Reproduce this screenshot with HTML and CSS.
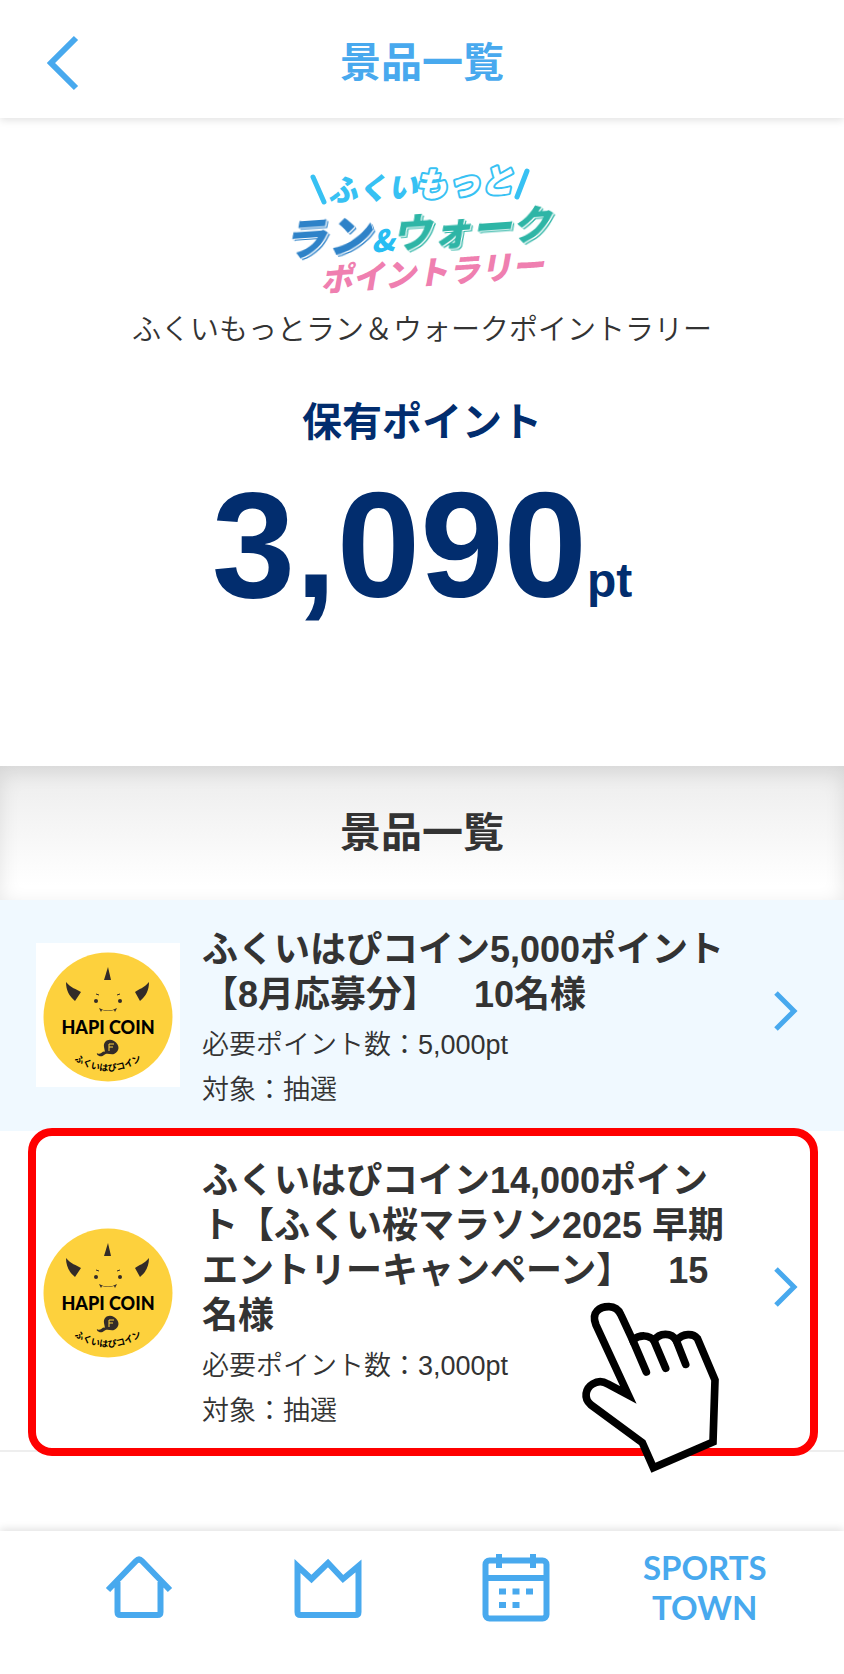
FILE: index.html
```html
<!DOCTYPE html>
<html lang="ja">

<head>
  <meta charset="UTF-8">
  <meta name="viewport" content="width=device-width, initial-scale=1.0">
  <title>景品一覧</title>
  <link rel="stylesheet" href="styles.css">
</head>

<body>
  <header class="header">
    <button class="back" type="button" aria-label="戻る">
      <svg width="32" height="56" viewBox="0 0 32 56"><path d="M29 3 L4 28 L29 53" /></svg>
    </button>
    <h1>景品一覧</h1>
  </header>

  <main>
    <section class="points">
      <svg class="logo" viewBox="20 8 264 136" role="img" aria-label="ふくいもっとラン＆ウォークポイントラリー">
        <path class="slash" d="M43 27 L54 52 M257 21 L247 47" />
        <g transform="rotate(-3 150 50)">
          <text class="logo-sky" x="58" y="47">ふくい</text>
          <text class="logo-outline" x="145" y="47">もっと</text>
        </g>
        <g transform="rotate(-4 150 90)">
          <text class="logo-blue" x="13" y="97">ラン</text>
          <text class="logo-amp" x="101" y="99">&amp;</text>
          <text class="logo-green" x="122" y="97">ウォーク</text>
        </g>
        <text class="logo-pink" x="51" y="142" transform="rotate(-4 51 142)">ポイントラリー</text>
      </svg>
      <p class="rally">ふくいもっとラン＆ウォークポイントラリー</p>
      <h2 class="label">保有ポイント</h2>
      <p class="total">3,090<span>pt</span></p>
    </section>

    <h2 class="list-title">景品一覧</h2>

    <ul class="prizes">
      <li class="prize pale">
        <a href="#">
          <svg class="coin" viewBox="0 0 144 144" role="img" aria-label="HAPI COIN">
            <g id="coin">
              <rect width="144" height="144" fill="#fff" />
              <circle cx="72" cy="74" r="64.5" fill="#fdd13d" />
              <g fill="#332b28">
                <path d="M72 24 L75 37 H68 Z" />
                <path d="M30 39 C35 45 40 46 45 49 L39 58 C33 53 30 47 30 39 Z" />
                <path d="M113 39 C108 45 103 46 99 49 L104 58 C110 53 113 47 113 39 Z" />
                <circle cx="60" cy="58" r="2" />
                <circle cx="84" cy="58" r="2" />
                <path d="M60 51 L63 52 M84 51 L81 52" stroke="#332b28" />
                <path d="M63 65 Q72 70 81 65 L79 69 L78 67 Q72 69 66 67 L65 69 Z" />
                <path d="M68 104 C67 98 73 95 78 98 C84 102 84 108 78 111 C74 112 71 109 68 112 C65 115 60 112 61 110 C64 113 67 107 69 109 Z" />
                <path d="M73 108 V101 H78 M73 104 H77" fill="none" stroke="#fdd13d" />
              </g>
              <text class="coin-name" x="72" y="91">HAPI COIN</text>
              <path id="coinArc" d="M34 114 Q72 142 110 114" fill="none" />
              <text class="coin-kana"><textPath href="#coinArc" startOffset="50%">ふくいはぴコイン</textPath></text>
            </g>
          </svg>
          <div class="info">
            <h3>ふくいはぴコイン5,000ポイント【8月応募分】　10名様</h3>
            <p>必要ポイント数：5,000pt</p>
            <p>対象：抽選</p>
          </div>
          <svg class="arrow" viewBox="0 0 24 40"><path d="M2 2 L20 20 L2 38" /></svg>
        </a>
      </li>
      <li class="prize">
        <a href="#">
          <svg class="coin" viewBox="0 0 144 144" role="img" aria-label="HAPI COIN"><use href="#coin" /></svg>
          <div class="info">
            <h3>ふくいはぴコイン14,000ポイント【ふくい桜マラソン2025 早期エントリーキャンペーン】　15名様</h3>
            <p>必要ポイント数：3,000pt</p>
            <p>対象：抽選</p>
          </div>
          <svg class="arrow" viewBox="0 0 24 40"><path d="M2 2 L20 20 L2 38" /></svg>
        </a>
        <div class="frame"></div>
        <svg class="hand" viewBox="0 0 540 630" aria-hidden="true">
          <path d="M205 345 L108 135 C92 95 120 80 147 80 C163 80 176 89 183 105 L218 180 C240 163 268 164 282 182 C298 158 334 156 349 182 C370 158 400 160 412 175 L465 300 L459 486 L280 563 L247 488 L92 374 C70 355 76 325 98 312 C113 303 130 304 143 312 Z" />
          <path class="knuckle" d="M218 180 L259 276 M282 182 L317 265 M349 182 L377 253" />
        </svg>
      </li>
    </ul>
  </main>

  <nav class="tabs">
    <a href="#" aria-label="ホーム">
      <svg width="68" height="68" viewBox="0 0 68 68">
        <path d="M3 36 L31 7 Q34 4 37 7 L65 36 M12.500 28 V58 Q12.500 61 15.500 61 H52.500 Q55.500 61 55.500 58 V28" />
      </svg>
    </a>
    <a href="#" aria-label="ランキング">
      <svg width="68" height="68" viewBox="0 0 68 68">
        <path d="M3.500 12 L17.500 25 L34 9 L49 25 L64.500 12 V58 Q64.500 61 61.500 61 H6.500 Q3.500 61 3.500 58 Z" />
      </svg>
    </a>
    <a href="#" aria-label="カレンダー">
      <svg width="68" height="68" viewBox="0 0 68 68">
        <rect x="3.500" y="6.500" width="61" height="58" rx="4" />
        <path d="M3 24 H65 M17 0 V14 M51 0 V14" />
        <path d="M17 37.500 H24 M30.500 37.500 H37.500 M44 37.500 H51 M17 51 H24 M30.500 51 H37.500" />
      </svg>
    </a>
    <a class="town" href="#">SPORTS<br>TOWN</a>
  </nav>
</body>

</html>
```

FILE: styles.css
```css
* {
  box-sizing: border-box;
}

body {
  margin: 0;
  min-height: 100vh;
  display: flex;
  flex-direction: column;
  background: #fff;
  color: #333;
  font-family: "Liberation Sans", "Noto Sans CJK JP", sans-serif;
  text-spacing-trim: space-all;
}

h1,
h2,
h3,
p,
ul {
  margin: 0;
  padding: 0;
}

a {
  color: inherit;
  text-decoration: none;
}

svg {
  display: block;
  flex-shrink: 0;
}

/* header */
.header {
  display: grid;
  grid-template-columns: 79px 1fr 79px;
  align-items: center;
  height: 118px;
  padding-top: 8px;
  box-shadow: 0 2px 8px rgba(0, 0, 0, 0.12);
}

.header h1 {
  font-size: 41px;
  line-height: 60px;
  text-align: center;
  color: #48a9ee;
}

.back {
  justify-self: end;
  padding: 0;
  border: none;
  background: none;
  cursor: pointer;
}

.back path,
.arrow path {
  fill: none;
  stroke: #48a9ee;
  stroke-width: 6;
}

.arrow path {
  stroke-width: 5;
}

/* points */
.points {
  padding: 40px 16px 146px;
  text-align: center;
}

.logo {
  width: 264px;
  height: 136px;
  margin: 0 auto 16px;
  overflow: visible;
  font-family: "Noto Sans CJK JP", sans-serif;
  font-style: italic;
  font-weight: 900;
}

.slash {
  fill: none;
  stroke: #37c1f3;
  stroke-width: 5;
  stroke-linecap: round;
}

.logo-sky {
  font-size: 30px;
  fill: #37c1f3;
}

.logo-outline {
  font-size: 33px;
  fill: #fff;
  stroke: #37c1f3;
  stroke-width: 4;
  stroke-linejoin: round;
  paint-order: stroke;
}

.logo-blue {
  font-size: 44px;
  fill: #2e82c8;
  filter: drop-shadow(1px 1px 0 #fff) drop-shadow(1px 1px 0 #2e82c8);
}

.logo-green {
  font-size: 40px;
  fill: #2eb5a6;
  filter: drop-shadow(1px 1px 0 #fff) drop-shadow(1px 1px 0 #2eb5a6);
}

.logo-amp {
  font-size: 30px;
  fill: #28bdf3;
}

.logo-pink {
  font-size: 32px;
  fill: #ef7fb0;
}

.rally {
  font-size: 29px;
  line-height: 40px;
  font-weight: 350;
}

.label {
  margin-top: 42px;
  font-size: 40px;
  line-height: 60px;
  color: #022d6e;
}

.total {
  margin-top: 18px;
  font-size: 150px;
  line-height: 150px;
  font-weight: bold;
  color: #022d6e;
}

.total span {
  font-size: 48px;
  line-height: 48px;
}

/* prizes */
.list-title {
  padding: 37px 0;
  font-size: 41px;
  line-height: 60px;
  text-align: center;
  background: linear-gradient(#ececec, #fff 90%);
  box-shadow: inset 0 6px 20px rgba(0, 0, 0, 0.1);
}

.prizes {
  list-style: none;
}

.prize {
  position: relative;
  border-bottom: 2px solid #eee;
}

.pale {
  background: #f0f9ff;
  border-color: #f0f9ff;
}

.prize a {
  display: flex;
  align-items: center;
  gap: 22px;
  padding: 17px 46px 16px 36px;
}

.coin {
  width: 144px;
  height: 144px;
}

.coin-name {
  font-family: Lato, sans-serif;
  font-size: 18px;
  font-weight: 900;
  text-anchor: middle;
}

.coin-kana {
  font-family: "Noto Sans CJK JP", sans-serif;
  font-size: 9px;
  font-weight: 700;
  text-anchor: middle;
}

.info {
  flex: 1;
  max-width: 530px;
  margin-top: 10px;
}

.info h3 {
  margin-bottom: 6px;
  font-size: 36px;
  line-height: 45px;
}

.info p {
  font-size: 27px;
  line-height: 45px;
  font-weight: 350;
}

.arrow {
  width: 24px;
  height: 40px;
  margin-bottom: 8px;
  margin-left: auto;
}

/* marks the row to tap */
.frame {
  position: absolute;
  inset: -3px 26px -6px 28px;
  border: 8px solid #f00;
  border-radius: 24px;
}

.hand {
  position: absolute;
  right: 104px;
  bottom: -40px;
  width: 180px;
  height: 210px;
  fill: #fff;
  stroke: #000;
  stroke-width: 23;
}

.knuckle {
  fill: none;
  stroke-linecap: round;
}

/* tab bar */
.tabs {
  display: grid;
  grid-template-columns: repeat(4, 1fr);
  justify-items: center;
  align-items: start;
  height: 143px;
  margin-top: auto;
  padding: 16px 45px 0;
  box-shadow: 0 -2px 8px rgba(0, 0, 0, 0.12);
}

.tabs svg {
  margin-top: 7px;
}

.tabs path,
.tabs rect {
  fill: none;
  stroke: #48a9ee;
  stroke-width: 6;
}

.town {
  font-family: Lato, sans-serif;
  font-size: 33px;
  line-height: 40px;
  font-weight: 700;
  text-align: center;
  color: #48a9ee;
}
```
